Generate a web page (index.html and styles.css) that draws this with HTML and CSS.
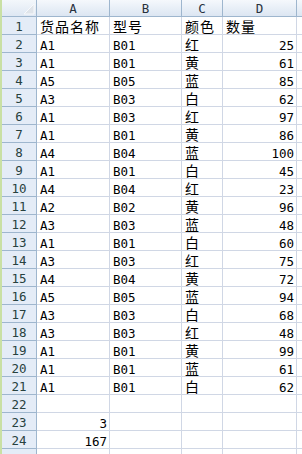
FILE: index.html
```html
<!DOCTYPE html>
<html>
<head>
<meta charset="utf-8">
<link rel="stylesheet" href="styles.css">
</head>
<body>
<div class="sheet">
  <div class="corner"><svg width="12" height="12" viewBox="0 0 12 12"><path d="M11 1 L11 11 L1 11 Z" fill="#dfe4ea" stroke="#f7f9fb" stroke-width="1"/></svg></div>
  <div class="ch">A</div><div class="ch">B</div><div class="ch">C</div><div class="ch">D</div><div class="ch last"></div>

  <div class="rh">1</div><div class="c"><span class="z">货品名称</span></div><div class="c"><span class="z">型号</span></div><div class="c"><span class="z">颜色</span></div><div class="c"><span class="z">数量</span></div><div class="c e"></div>
  <div class="rh">2</div><div class="c"><span>A1</span></div><div class="c"><span>B01</span></div><div class="c"><span class="z">红</span></div><div class="c n"><span>25</span></div><div class="c e"></div>
  <div class="rh">3</div><div class="c"><span>A1</span></div><div class="c"><span>B01</span></div><div class="c"><span class="z">黄</span></div><div class="c n"><span>61</span></div><div class="c e"></div>
  <div class="rh">4</div><div class="c"><span>A5</span></div><div class="c"><span>B05</span></div><div class="c"><span class="z">蓝</span></div><div class="c n"><span>85</span></div><div class="c e"></div>
  <div class="rh">5</div><div class="c"><span>A3</span></div><div class="c"><span>B03</span></div><div class="c"><span class="z">白</span></div><div class="c n"><span>62</span></div><div class="c e"></div>
  <div class="rh">6</div><div class="c"><span>A1</span></div><div class="c"><span>B03</span></div><div class="c"><span class="z">红</span></div><div class="c n"><span>97</span></div><div class="c e"></div>
  <div class="rh">7</div><div class="c"><span>A1</span></div><div class="c"><span>B01</span></div><div class="c"><span class="z">黄</span></div><div class="c n"><span>86</span></div><div class="c e"></div>
  <div class="rh">8</div><div class="c"><span>A4</span></div><div class="c"><span>B04</span></div><div class="c"><span class="z">蓝</span></div><div class="c n"><span>100</span></div><div class="c e"></div>
  <div class="rh">9</div><div class="c"><span>A1</span></div><div class="c"><span>B01</span></div><div class="c"><span class="z">白</span></div><div class="c n"><span>45</span></div><div class="c e"></div>
  <div class="rh">10</div><div class="c"><span>A4</span></div><div class="c"><span>B04</span></div><div class="c"><span class="z">红</span></div><div class="c n"><span>23</span></div><div class="c e"></div>
  <div class="rh">11</div><div class="c"><span>A2</span></div><div class="c"><span>B02</span></div><div class="c"><span class="z">黄</span></div><div class="c n"><span>96</span></div><div class="c e"></div>
  <div class="rh">12</div><div class="c"><span>A3</span></div><div class="c"><span>B03</span></div><div class="c"><span class="z">蓝</span></div><div class="c n"><span>48</span></div><div class="c e"></div>
  <div class="rh">13</div><div class="c"><span>A1</span></div><div class="c"><span>B01</span></div><div class="c"><span class="z">白</span></div><div class="c n"><span>60</span></div><div class="c e"></div>
  <div class="rh">14</div><div class="c"><span>A3</span></div><div class="c"><span>B03</span></div><div class="c"><span class="z">红</span></div><div class="c n"><span>75</span></div><div class="c e"></div>
  <div class="rh">15</div><div class="c"><span>A4</span></div><div class="c"><span>B04</span></div><div class="c"><span class="z">黄</span></div><div class="c n"><span>72</span></div><div class="c e"></div>
  <div class="rh">16</div><div class="c"><span>A5</span></div><div class="c"><span>B05</span></div><div class="c"><span class="z">蓝</span></div><div class="c n"><span>94</span></div><div class="c e"></div>
  <div class="rh">17</div><div class="c"><span>A3</span></div><div class="c"><span>B03</span></div><div class="c"><span class="z">白</span></div><div class="c n"><span>68</span></div><div class="c e"></div>
  <div class="rh">18</div><div class="c"><span>A3</span></div><div class="c"><span>B03</span></div><div class="c"><span class="z">红</span></div><div class="c n"><span>48</span></div><div class="c e"></div>
  <div class="rh">19</div><div class="c"><span>A1</span></div><div class="c"><span>B01</span></div><div class="c"><span class="z">黄</span></div><div class="c n"><span>99</span></div><div class="c e"></div>
  <div class="rh">20</div><div class="c"><span>A1</span></div><div class="c"><span>B01</span></div><div class="c"><span class="z">蓝</span></div><div class="c n"><span>61</span></div><div class="c e"></div>
  <div class="rh">21</div><div class="c"><span>A1</span></div><div class="c"><span>B01</span></div><div class="c"><span class="z">白</span></div><div class="c n"><span>62</span></div><div class="c e"></div>
  <div class="rh">22</div><div class="c"></div><div class="c"></div><div class="c"></div><div class="c"></div><div class="c e"></div>
  <div class="rh">23</div><div class="c n"><span>3</span></div><div class="c"></div><div class="c"></div><div class="c"></div><div class="c e"></div>
  <div class="rh">24</div><div class="c n"><span>167</span></div><div class="c"></div><div class="c"></div><div class="c"></div><div class="c e"></div>
  <div class="rh"></div><div class="c"></div><div class="c"></div><div class="c"></div><div class="c"></div><div class="c e"></div>
</div>
</body>
</html>
```

FILE: styles.css
```css
html, body {
  margin: 0;
  padding: 0;
  background: #ffffff;
}
body {
  width: 302px;
  height: 454px;
  overflow: hidden;
}
.sheet {
  display: grid;
  grid-template-columns: 35px 73px 72px 41px 74px 1fr;
  grid-template-rows: 17px;
  grid-auto-rows: 18px;
  border-left: 2px solid #c9e0a4;
  font-family: "DejaVu Sans Mono", "Noto Sans CJK SC", monospace;
  font-size: 12.5px;
  color: #000;
}
.corner {
  background: linear-gradient(#f3f7fb, #dee7f3);
  border-right: 1px solid #9eb6ce;
  border-bottom: 1px solid #9eb6ce;
  display: flex;
  justify-content: flex-end;
  align-items: flex-end;
  padding: 0 1px 1px 0;
}
.corner svg { display: block; }
.ch {
  background: linear-gradient(#f5f8fc, #dce6f2);
  border-right: 1px solid #9eb6ce;
  border-bottom: 1px solid #9eb6ce;
  text-align: center;
  line-height: 18px;
  height: 16px;
  overflow: hidden;
  color: #27313d;
}
.ch.last { border-right: none; }
.rh {
  background: #e4ecf7;
  border-right: 1px solid #9eb6ce;
  border-bottom: 1px solid #9eb6ce;
  text-align: center;
  line-height: 19px;
  height: 17px;
  overflow: hidden;
  color: #27413e;
}
.c {
  border-right: 1px solid #d0d7e5;
  border-bottom: 1px solid #d0d7e5;
  display: flex;
  align-items: flex-end;
  padding: 0 3px 0 3px;
  overflow: hidden;
  white-space: nowrap;
}
.c span {
  line-height: 1;
  display: block;
}
.c .z {
  font-family: "Noto Sans CJK SC", sans-serif;
  font-size: 14px;
  letter-spacing: 1px;
  padding-bottom: 1px;
}
.c.n {
  justify-content: flex-end;
  padding-right: 2px;
}
.c.e {
  border-right: none;
}
```
